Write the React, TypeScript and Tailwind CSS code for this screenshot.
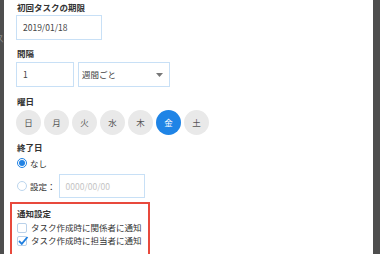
import React from 'react';

const font = { fontFamily: '"Noto Sans CJK JP", "Noto Sans", sans-serif' };

const days = ['日', '月', '火', '水', '木', '金', '土'];

const Label: React.FC<{ children: React.ReactNode; className?: string }> = ({ children, className }) => (
  <div className={`text-[8.5px] leading-[12px] font-bold text-[#333] ${className ?? ''}`}>{children}</div>
);

export default function App() {
  return (
    <div className="w-[380px] h-[254px] flex overflow-hidden bg-white" style={font}>
      {/* dimmed page behind the modal */}
      <div className="w-[4px] shrink-0 bg-[#4e4e4e] overflow-hidden">
        <div className="pt-[33px] -ml-[5px] text-[9px] leading-[12px] text-[#8a8a8a]">ス</div>
      </div>

      <div className="flex-1 pl-[12px] overflow-hidden">
        <Label className="mt-[1px] pl-[1px]">初回タスクの期限</Label>
        <div className="mt-[2px] w-[86px] h-[25px] border border-[#c8e0f6] flex items-center pl-[6px] text-[8.5px] text-[#444]">
          2019/01/18
        </div>

        <Label className="mt-[7px] pl-[1px]">間隔</Label>
        <div className="mt-[3px] flex gap-[4px]">
          <div className="w-[58px] h-[25px] border border-[#c8e0f6] flex items-center pl-[6px] text-[8.5px] text-[#444]">1</div>
          <div className="w-[92px] h-[25px] border border-[#c8e0f6] flex items-center justify-between pl-[3px] pr-[6px] text-[8.5px] text-[#444]">
            <span>週間ごと</span>
            <svg width="7" height="4" viewBox="0 0 7 4">
              <path d="M0 0 H7 L3.5 4 Z" fill="#777" />
            </svg>
          </div>
        </div>

        <Label className="mt-[8px] pl-[1px]">曜日</Label>
        <div className="mt-[3px] flex gap-[3px]">
          {days.map((d) => (
            <div
              key={d}
              className={`w-[25px] h-[25px] rounded-full flex items-center justify-center text-[8.5px] ${
                d === '金' ? 'bg-[#1f84e6] text-white' : 'bg-[#e9e9e9] text-[#555]'
              }`}
            >
              {d}
            </div>
          ))}
        </div>

        <Label className="mt-[6px] pl-[1px]">終了日</Label>
        <div className="mt-[3px] h-[14px] flex items-center gap-[3px] pl-[1px] text-[8.5px] text-[#333]">
          <span className="w-[10px] h-[10px] rounded-full border border-[#2283e4] bg-white flex items-center justify-center">
            <span className="w-[6px] h-[6px] rounded-full bg-[#2283e4]" />
          </span>
          <span>なし</span>
        </div>
        <div className="mt-[4px] h-[24px] flex items-center pl-[1px] text-[8.5px] text-[#333]">
          <span className="w-[10px] h-[10px] rounded-full border border-[#bcd6ee] bg-white" />
          <span className="ml-[3px]">設定：</span>
          <div className="ml-[3px] w-[86px] h-[24px] border border-[#c8e0f6] flex items-center pl-[6px] text-[#c4c4c4]">
            0000/00/00
          </div>
        </div>

        <div className="mt-[4px] -ml-[6px] w-[140px] h-[70px] border-2 border-[#e8493c] pl-[5px] pt-[3px]">
          <Label>通知設定</Label>
          <div className="mt-[2px] h-[13px] flex items-center gap-[4px] text-[8.5px] text-[#333]">
            <span className="w-[10px] h-[10px] rounded-[2px] border border-[#b9d1ea] bg-white" />
            <span>タスク作成時に関係者に通知</span>
          </div>
          <div className="h-[13px] flex items-center gap-[4px] text-[8.5px] text-[#333]">
            <span className="relative w-[10px] h-[10px] rounded-[2px] border border-[#b9d1ea] bg-white">
              <svg className="absolute -left-[1px] -top-[2px]" width="12" height="11" viewBox="0 0 12 11">
                <path d="M2 6 L4.8 8.8 L10.5 2" fill="none" stroke="#1f7fe0" strokeWidth="1.8" />
              </svg>
            </span>
            <span>タスク作成時に担当者に通知</span>
          </div>
        </div>
      </div>

      <div className="w-[7px] shrink-0 bg-[#4e4e4e]" />
    </div>
  );
}
